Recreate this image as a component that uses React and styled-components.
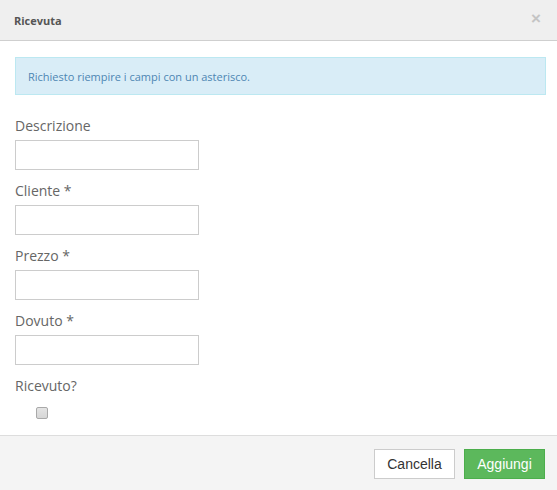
import React from "react";
import styled, { createGlobalStyle } from "styled-components";

const GlobalStyle = createGlobalStyle`
  html, body {
    margin: 0;
    padding: 0;
    background: #fff;
  }
  body {
    font-family: "Open Sans", "Liberation Sans", sans-serif;
  }
`;

const Modal = styled.div`
  width: 557px;
  height: 490px;
  display: flex;
  flex-direction: column;
  background: #fff;
  overflow: hidden;
`;

const Header = styled.div`
  flex-shrink: 0;
  height: 40px;
  display: flex;
  align-items: center;
  justify-content: space-between;
  padding: 0 14px;
  background: #efefef;
  border-bottom: 1px solid #cfcfcf;
`;

const Title = styled.h4`
  margin: 0;
  font-size: 11px;
  font-weight: 700;
  color: #555;
`;

const Close = styled.span`
  font-family: "Liberation Sans", sans-serif;
  font-size: 17px;
  font-weight: 700;
  color: #c4c4c4;
  line-height: 1;
  margin-top: -4px;
  margin-right: 2px;
`;

const Body = styled.div`
  flex: 1;
  padding: 16px 11px 0 15px;
`;

const Alert = styled.div`
  height: 36px;
  display: flex;
  align-items: center;
  padding: 0 12px;
  margin-bottom: 21px;
  background: #d9edf7;
  border: 1px solid #bce8f1;
  color: #4d86b3;
  font-size: 11px;
`;

const Group = styled.div`
  display: flex;
  flex-direction: column;
  align-items: flex-start;
  margin-bottom: 11px;
`;

const Label = styled.label`
  font-size: 14px;
  color: #666;
  line-height: 20px;
  margin-bottom: 4px;
`;

const Input = styled.input`
  box-sizing: border-box;
  width: 184px;
  height: 30px;
  border: 1px solid #ccc;
  padding: 4px 8px;
  font-size: 13px;
  margin: 0;
  outline: none;
`;

const Check = styled.input`
  appearance: none;
  box-sizing: border-box;
  margin: 7px 0 0 21px;
  width: 12px;
  height: 12px;
  border: 1px solid #a9a9a9;
  border-radius: 2px;
  background: linear-gradient(#e4e4e4, #d6d6d6);
`;

const Footer = styled.div`
  flex-shrink: 0;
  height: 54px;
  display: flex;
  justify-content: flex-end;
  align-items: center;
  gap: 9px;
  padding: 0 12px 0 0;
  background: #f4f4f4;
  border-top: 1px solid #dddddd;
`;

const Button = styled.button`
  box-sizing: border-box;
  width: 81px;
  height: 30px;
  font-family: "Liberation Sans", Arial, sans-serif;
  font-size: 14px;
  border: 1px solid ${(p) => (p.$primary ? "#4cae4c" : "#ccc")};
  background: ${(p) => (p.$primary ? "#5cb85c" : "#fff")};
  color: ${(p) => (p.$primary ? "#fff" : "#333")};
  border-radius: 0;
  padding: 0;
  margin-top: 2px;
`;

const fields = ["Descrizione", "Cliente *", "Prezzo *", "Dovuto *"];

export default function App() {
  return (
    <>
      <GlobalStyle />
      <Modal>
        <Header>
          <Title>Ricevuta</Title>
          <Close>×</Close>
        </Header>
        <Body>
          <Alert>Richiesto riempire i campi con un asterisco.</Alert>
          {fields.map((f) => (
            <Group key={f}>
              <Label>{f}</Label>
              <Input type="text" />
            </Group>
          ))}
          <Group>
            <Label>Ricevuto?</Label>
            <Check type="checkbox" />
          </Group>
        </Body>
        <Footer>
          <Button>Cancella</Button>
          <Button $primary>Aggiungi</Button>
        </Footer>
      </Modal>
    </>
  );
}
